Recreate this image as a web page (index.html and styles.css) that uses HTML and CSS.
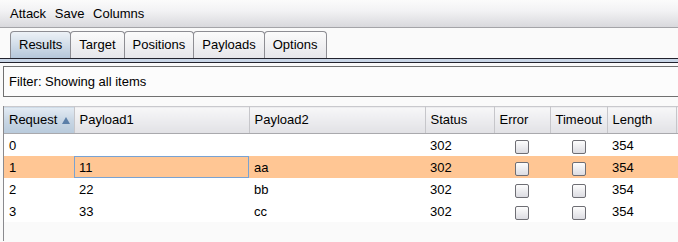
FILE: index.html
```html
<!DOCTYPE html>
<html lang="en">
<head>
    <meta charset="UTF-8">
    <meta name="viewport" content="width=device-width, initial-scale=1.0">
    <title>Intruder Attack</title>
    <link rel="stylesheet" href="styles.css">
</head>
<body>

    <div class="menubar">
        <span>Attack</span>
        <span>Save</span>
        <span>Columns</span>
    </div>

    <div class="tabs">
        <div class="tab active">Results</div>
        <div class="tab">Target</div>
        <div class="tab">Positions</div>
        <div class="tab">Payloads</div>
        <div class="tab">Options</div>
    </div>
    <div class="tabline"></div>

    <div class="panel">
        <div class="filter">Filter: Showing all items</div>

        <div class="grid">
            <table class="results">
                <colgroup>
                    <col class="c-req">
                    <col class="c-p1">
                    <col class="c-p2">
                    <col class="c-status">
                    <col class="c-error">
                    <col class="c-timeout">
                    <col class="c-length">
                    <col class="c-extra">
                </colgroup>
                <thead>
                    <tr>
                        <th class="sorted">Request <span class="arrow"></span></th>
                        <th>Payload1</th>
                        <th>Payload2</th>
                        <th>Status</th>
                        <th>Error</th>
                        <th>Timeout</th>
                        <th>Length</th>
                        <th></th>
                    </tr>
                </thead>
                <tbody>
                    <tr>
                        <td>0</td><td></td><td></td><td>302</td>
                        <td class="check"><span class="box"></span></td>
                        <td class="check"><span class="box"></span></td>
                        <td>354</td><td></td>
                    </tr>
                    <tr class="selected">
                        <td>1</td><td class="focus">11</td><td>aa</td><td>302</td>
                        <td class="check"><span class="box"></span></td>
                        <td class="check"><span class="box"></span></td>
                        <td>354</td><td></td>
                    </tr>
                    <tr>
                        <td>2</td><td>22</td><td>bb</td><td>302</td>
                        <td class="check"><span class="box"></span></td>
                        <td class="check"><span class="box"></span></td>
                        <td>354</td><td></td>
                    </tr>
                    <tr>
                        <td>3</td><td>33</td><td>cc</td><td>302</td>
                        <td class="check"><span class="box"></span></td>
                        <td class="check"><span class="box"></span></td>
                        <td>354</td><td></td>
                    </tr>
                </tbody>
            </table>
        </div>
    </div>

</body>
</html>
```

FILE: styles.css
```css
body { margin: 0; width: 678px; height: 242px; overflow: hidden; background: #f9f9f9; font-family: "Liberation Sans", Arial, sans-serif; font-size: 13px; color: #000; }

.menubar { height: 27px; line-height: 27px; padding-left: 10px; border-bottom: 1px solid #a4a4a8; background: linear-gradient(#fbfbfb, #f2f2f4 40%, #d9d9dd); }
.menubar span { margin-right: 5px; }

.tabs { display: flex; padding: 3px 0 0 10px; height: 27px; background: #fafafa; }
.tab { height: 26px; line-height: 26px; padding: 0 8px; margin-right: -1px; border: 1px solid #8d8d93; border-bottom: none; border-radius: 4px 4px 0 0; background: linear-gradient(#fbfbfb, #e6e6ea); }
.tab.active { position: relative; z-index: 1; background: linear-gradient(#edf2f7, #b5c7da); }

.tabline { height: 3px; border-top: 1px solid #22232e; border-bottom: 1px solid #22232e; background: #c9d6e7; }

.panel { padding: 3px 0 0 3px; background: #fafafa; height: 176px; }

.filter { height: 29px; line-height: 29px; padding-left: 5px; border: 1px solid #707070; border-right: none; background: #fcfcfc; }

.grid { margin-top: 9px; height: 135px; border-left: 1px solid #8a8a8e; background: #fafafa; overflow: hidden; }

.results { border-collapse: collapse; table-layout: fixed; width: 760px; }
.c-req { width: 70px; }
.c-p1 { width: 175px; }
.c-p2 { width: 176px; }
.c-status { width: 69px; }
.c-error { width: 56px; }
.c-timeout { width: 57px; }
.c-length { width: 69px; }

.results th { height: 24px; padding: 0 5px 2px; text-align: left; font-weight: normal; border-top: 1px solid #c9c9cd; border-bottom: 1px solid #a9a9ad; border-right: 1px solid #c6c6ca; background: linear-gradient(#f7f7f8, #ececef 50%, #e1e1e5); white-space: nowrap; }
.results th.sorted { background: linear-gradient(#e3ebf3, #c8d6e4 50%, #b8cadb); }
.arrow { display: inline-block; width: 0; height: 0; margin-left: 1px; border-left: 4px solid transparent; border-right: 4px solid transparent; border-bottom: 7px solid #5b7fa8; vertical-align: 0; }

.results td { height: 22px; padding: 0 5px; background: #fff; white-space: nowrap; }
.results tr.selected td { background: #ffc694; }
.results td.focus { box-shadow: inset 0 0 0 1px #79a2d2; }
.results td.check { text-align: center; padding: 0; }

.box { display: inline-block; width: 12px; height: 12px; margin-top: 3px; vertical-align: middle; border: 1px solid #6e6e74; border-radius: 2px; background: linear-gradient(#fdfdfd, #dcdce2); }
```
